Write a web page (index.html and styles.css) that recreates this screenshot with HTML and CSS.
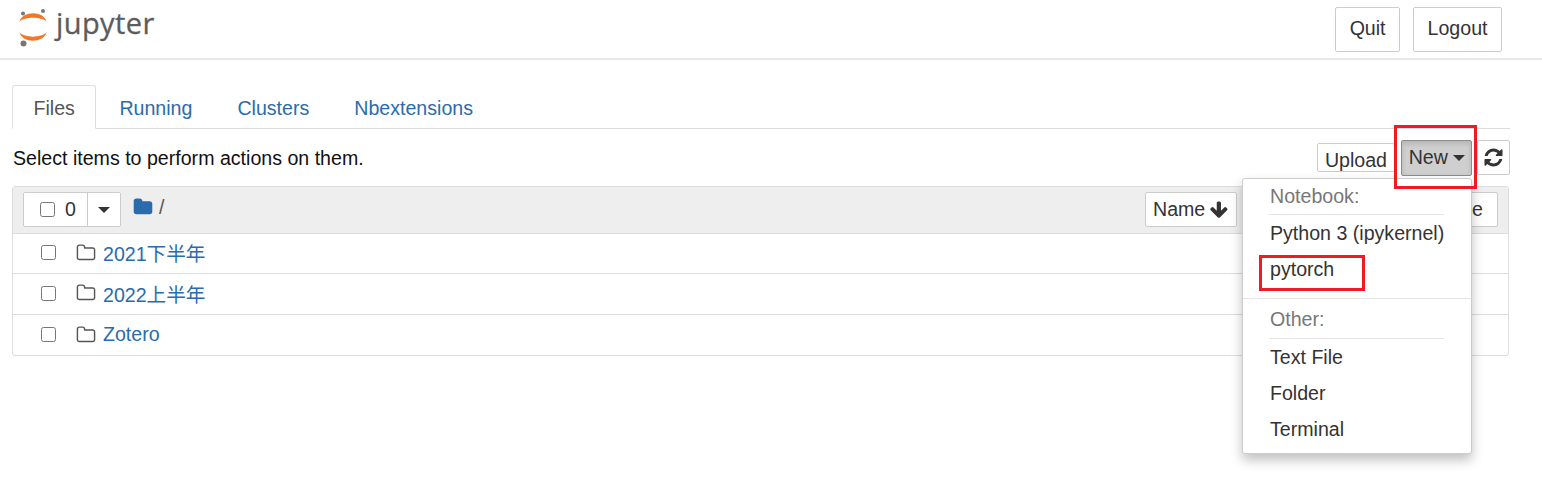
FILE: index.html
```html
<!DOCTYPE html>
<html lang="en">
<head>
    <meta charset="UTF-8">
    <meta name="viewport" content="width=device-width, initial-scale=1.0">
    <title>Home Page - Jupyter</title>
    <link rel="stylesheet" href="styles.css">
</head>
<body>
    <header class="site-header">
        <a class="logo" href="#">
            <svg class="logo-mark" viewBox="0 0 30 38" width="30" height="38">
                <circle cx="5" cy="4.5" r="2" fill="#767677"/>
                <circle cx="25" cy="2" r="2" fill="#767677"/>
                <circle cx="5.5" cy="34.5" r="3" fill="#767677"/>
                <path d="M1.5 12.5C4.5 1.5 25.5 1.5 28.5 12.5C23 7.5 7 7.5 1.5 12.5Z" fill="#f37726"/>
                <path d="M1.5 23.5C7 29 23 29 28.5 23.5C25.5 34.5 4.5 34.5 1.5 23.5Z" fill="#f37726"/>
            </svg>
            <span class="logo-text">jupyter</span>
        </a>
        <div class="header-buttons">
            <button class="btn">Quit</button>
            <button class="btn">Logout</button>
        </div>
    </header>

    <main class="page">
        <ul class="tabs">
            <li class="tab active"><a href="#">Files</a></li>
            <li class="tab"><a href="#">Running</a></li>
            <li class="tab"><a href="#">Clusters</a></li>
            <li class="tab"><a href="#">Nbextensions</a></li>
        </ul>

        <div class="toolbar">
            <span class="hint">Select items to perform actions on them.</span>
            <div class="actions">
                <button class="btn upload">Upload</button>
                <button class="btn new-btn">New <span class="caret"></span></button>
                <button class="btn refresh">
                    <svg viewBox="0 0 1792 1792" width="21" height="21"><path d="M1639 1056q0 5-1 7-64 268-268 434.5t-478 166.5q-146 0-282.5-55t-243.5-157l-129 129q-19 19-45 19t-45-19-19-45v-448q0-26 19-45t45-19h448q26 0 45 19t19 45-19 45l-137 137q71 66 161 102t187 36q134 0 250-65t186-179q11-17 53-117 8-23 30-23h192q13 0 22.5 9.5t9.5 22.5zm25-800v448q0 26-19 45t-45 19h-448q-26 0-45-19t-19-45 19-45l138-138q-148-137-349-137-134 0-250 65t-186 179q-11 17-53 117-8 23-30 23h-199q-13 0-22.5-9.5t-9.5-22.5v-7q65-268 270-434.5t480-166.5q146 0 284 55.5t245 156.5l130-129q19-19 45-19t45 19 19 45z" fill="#333"/></svg>
                </button>
            </div>
        </div>

        <section class="file-list">
            <div class="list-head">
                <div class="select-group">
                    <label class="select-count"><input type="checkbox"> <span>0</span></label>
                    <span class="select-toggle"><span class="caret"></span></span>
                </div>
                <svg class="crumb-icon" viewBox="0 0 1792 1792" width="20" height="20"><path d="M1728 608v704q0 92-66 158t-158 66h-1216q-92 0-158-66t-66-158v-960q0-92 66-158t158-66h320q92 0 158 66t66 158v32h672q92 0 158 66t66 158z" fill="#2a6cab"/></svg>
                <span class="crumb-sep">/</span>
                <div class="sort-buttons">
                    <button class="btn sort name-sort">Name
                        <svg viewBox="0 0 1792 1792" width="20" height="20"><path d="M1675 832q0 53-37 90l-651 652q-39 37-91 37-53 0-90-37l-651-652q-38-36-38-90 0-53 38-91l74-75q39-37 91-37 53 0 90 37l294 294v-704q0-52 38-90t90-38h128q52 0 90 38t38 90v704l294-294q37-37 90-37 52 0 91 37l75 75q37 39 37 91z" fill="#333"/></svg>
                    </button>
                    <button class="btn sort size-sort">File size</button>
                </div>
            </div>
            <div class="file-row">
                <input type="checkbox">
                <svg class="folder" viewBox="0 0 1792 1792" width="20" height="20"><path d="M1600 1312v-704q0-40-28-68t-68-28h-704q-40 0-68-28t-28-68v-64q0-40-28-68t-68-28h-320q-40 0-68 28t-28 68v960q0 40 28 68t68 28h1216q40 0 68-28t28-68zm128-704v704q0 92-66 158t-158 66h-1216q-92 0-158-66t-66-158v-960q0-92 66-158t158-66h320q92 0 158 66t66 158v32h672q92 0 158 66t66 158z" fill="#555"/></svg>
                <a href="#">2021下半年</a>
            </div>
            <div class="file-row">
                <input type="checkbox">
                <svg class="folder" viewBox="0 0 1792 1792" width="20" height="20"><path d="M1600 1312v-704q0-40-28-68t-68-28h-704q-40 0-68-28t-28-68v-64q0-40-28-68t-68-28h-320q-40 0-68 28t-28 68v960q0 40 28 68t68 28h1216q40 0 68-28t28-68zm128-704v704q0 92-66 158t-158 66h-1216q-92 0-158-66t-66-158v-960q0-92 66-158t158-66h320q92 0 158 66t66 158v32h672q92 0 158 66t66 158z" fill="#555"/></svg>
                <a href="#">2022上半年</a>
            </div>
            <div class="file-row">
                <input type="checkbox">
                <svg class="folder" viewBox="0 0 1792 1792" width="20" height="20"><path d="M1600 1312v-704q0-40-28-68t-68-28h-704q-40 0-68-28t-28-68v-64q0-40-28-68t-68-28h-320q-40 0-68 28t-28 68v960q0 40 28 68t68 28h1216q40 0 68-28t28-68zm128-704v704q0 92-66 158t-158 66h-1216q-92 0-158-66t-66-158v-960q0-92 66-158t158-66h320q92 0 158 66t66 158v32h672q92 0 158 66t66 158z" fill="#555"/></svg>
                <a href="#">Zotero</a>
            </div>
        </section>
    </main>

    <ul class="new-menu">
        <li class="menu-head">Notebook:</li>
        <li class="menu-rule"></li>
        <li class="menu-item">Python 3 (ipykernel)</li>
        <li class="menu-item">pytorch</li>
        <li class="menu-divider"></li>
        <li class="menu-head">Other:</li>
        <li class="menu-rule"></li>
        <li class="menu-item">Text File</li>
        <li class="menu-item">Folder</li>
        <li class="menu-item">Terminal</li>
    </ul>

    <div class="mark mark-new"></div>
    <div class="mark mark-pytorch"></div>
</body>
</html>
```

FILE: styles.css
```css
* {
    box-sizing: border-box;
}
body {
    margin: 0;
    font-family: "Liberation Sans", "Noto Sans CJK SC", Arial, sans-serif;
    font-size: 19.6px;
    color: #333;
    background-color: #fff;
    overflow: hidden;
}
a {
    color: #2a6cab;
    text-decoration: none;
}
.btn {
    font: inherit;
    color: #333;
    background-color: #fff;
    border: 1px solid #ccc;
    border-radius: 2px;
    padding: 0 13px;
    cursor: pointer;
}

/* header */
.site-header {
    height: 60px;
    display: flex;
    justify-content: space-between;
    border-bottom: 2px solid #e7e7e7;
    padding: 7px 40px 0 18px;
}
.logo {
    display: flex;
    align-items: flex-start;
    height: 38px;
}
.logo-mark {
    margin-top: 2px;
}
.logo-text {
    font-family: "Open Sans", sans-serif;
    font-size: 29px;
    line-height: 32px;
    letter-spacing: .4px;
    color: #5c5c5c;
    margin-left: 8px;
    -webkit-text-stroke: .3px #5c5c5c;
}
.header-buttons {
    display: flex;
    gap: 13px;
}
.header-buttons .btn {
    height: 45px;
    padding: 0 13.5px 2px;
}

/* tabs */
.page {
    padding: 25px 32px 0 12px;
}
.tabs {
    display: flex;
    list-style: none;
    margin: 0;
    padding: 0;
    height: 44px;
    border-bottom: 1px solid #ddd;
}
.tab {
    margin-right: 3px;
    height: 44px;
    border: 1px solid transparent;
    border-radius: 3px 3px 0 0;
    padding: 0 20px;
    line-height: 44px;
}
.tab.active {
    margin-right: 2px;
    padding: 0 20.5px;
    border-color: #ddd #ddd #fff;
    background-color: #fff;
}
.tab.active a {
    color: #555;
}

/* toolbar */
.toolbar {
    height: 57px;
    display: flex;
    justify-content: space-between;
    padding-top: 11px;
}
.hint {
    margin: 7px 0 0 1px;
    color: #111;
}
.actions {
    display: flex;
    align-items: flex-start;
}
.upload {
    height: 29px;
    margin: 3px 6px 0 0;
    padding: 5px 7px 0;
}
.new-btn {
    width: 71px;
    height: 36px;
    padding: 0 0 2px 1px;
    background-color: #cfcfcf;
    border-color: #8c8c8c;
    box-shadow: inset 0 3px 5px rgba(0, 0, 0, .125);
}
.refresh {
    width: 33px;
    height: 35px;
    margin-left: 5px;
    padding: 0;
    display: flex;
    align-items: center;
    justify-content: center;
}
.caret {
    display: inline-block;
    width: 0;
    height: 0;
    vertical-align: middle;
    border-top: 6px solid #333;
    border-left: 6px solid transparent;
    border-right: 6px solid transparent;
}

/* file list */
.file-list {
    height: 170px;
    margin-right: 1px;
    border: 1px solid #ddd;
    border-radius: 3px;
}
.list-head {
    height: 47px;
    display: flex;
    align-items: flex-start;
    padding: 5px 10px 0;
    background-color: #eee;
    border-bottom: 1px solid #ddd;
}
.select-group {
    display: flex;
    height: 35px;
    background-color: #fff;
    border: 1px solid #ccc;
    border-radius: 2px;
}
.select-count {
    width: 64px;
    display: flex;
    align-items: center;
    justify-content: flex-end;
    gap: 10px;
    padding-right: 11px;
    border-right: 1px solid #ccc;
}
.select-count input {
    margin: 0 0 6px;
}
.select-toggle {
    width: 32px;
    display: flex;
    align-items: center;
    justify-content: center;
}
input[type="checkbox"] {
    width: 15px;
    height: 15px;
    margin: 0;
}
.crumb-icon {
    margin: 5px 0 0 12px;
}
.crumb-sep {
    margin: 4px 0 0 6px;
    color: #555;
}
.sort-buttons {
    margin-left: auto;
    display: flex;
}
.sort {
    height: 35px;
    padding: 0 7px;
    white-space: nowrap;
    display: flex;
    align-items: center;
    gap: 5px;
}
.name-sort {
    width: 92px;
    gap: 4px;
    margin-right: 163px;
}
.size-sort {
    width: 98px;
    padding-right: 14px;
    justify-content: flex-end;
}
.file-row {
    height: 41px;
    display: flex;
    align-items: center;
    padding: 0 0 2px 28px;
    border-bottom: 1px solid #ddd;
}
.list-head + .file-row {
    height: 40px;
}
.file-row:last-child {
    border-bottom: none;
}
.folder {
    margin: 0 7px 0 20px;
}

/* dropdown */
.new-menu {
    position: absolute;
    left: 1242px;
    top: 178px;
    width: 230px;
    height: 276px;
    margin: 0;
    padding: 7px 0 0;
    list-style: none;
    background-color: #fff;
    border: 1px solid #ccc;
    border-radius: 3px;
    box-shadow: 0 6px 12px rgba(0, 0, 0, .25);
}
.menu-head {
    height: 28px;
    line-height: 20px;
    padding-left: 27px;
    color: #777;
}
.menu-divider + .menu-head {
    height: 29px;
}
.menu-rule {
    height: 1px;
    margin: 0 27px 0 26px;
    background-color: #e5e5e5;
}
.menu-item {
    height: 36px;
    line-height: 36px;
    padding-left: 27px;
}
.menu-divider {
    height: 1px;
    margin: 11px 0 10px;
    background-color: #e5e5e5;
}

/* red annotation boxes */
.mark {
    position: absolute;
    border: 3px solid #ed1c24;
}
.mark-new {
    left: 1394px;
    top: 125px;
    width: 83px;
    height: 64px;
}
.mark-pytorch {
    left: 1259px;
    top: 255px;
    width: 106px;
    height: 36px;
}
```
